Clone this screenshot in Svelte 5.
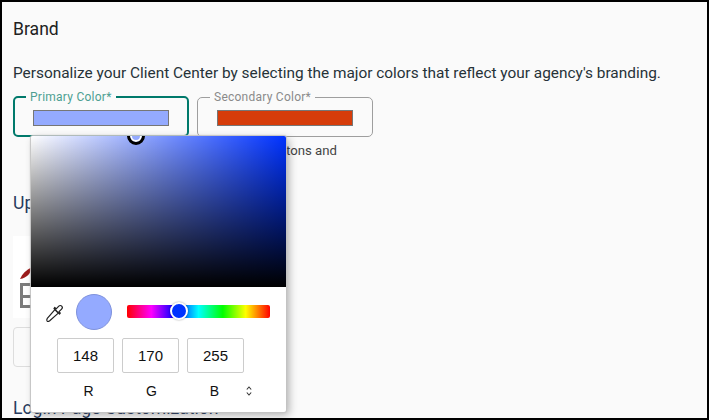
<script>
  const channels = [
    { label: 'R', value: 148 },
    { label: 'G', value: 170 },
    { label: 'B', value: 255 }
  ];
</script>

<div class="page">
  <h2 class="brand">Brand</h2>
  <p class="intro">Personalize your Client Center by selecting the major colors that reflect your agency's branding.</p>

  <div class="fields">
    <fieldset class="field active">
      <legend>Primary Color*</legend>
      <div class="swatch primary"></div>
    </fieldset>
    <fieldset class="field">
      <legend>Secondary Color*</legend>
      <div class="swatch secondary"></div>
    </fieldset>
  </div>
  <p class="hint">Used for buttons and</p>

  <h2 class="upload">Upload Logo</h2>
  <div class="logo">
    <svg width="80" height="82" viewBox="0 0 80 82" aria-hidden="true">
      <path d="M7 43c2-5 6-9 12-12-1 6-5 11-12 12z" fill="#9c1c1c" />
      <path d="M7 47h18v3H10v9h12v3H10v7h15v3H7z" fill="#7b7b7b" />
    </svg>
  </div>
  <div class="upload-btn"></div>
  <h2 class="login">Login Page Customization</h2>

  <div class="picker">
    <div class="saturation">
      <span class="sat-handle"></span>
    </div>
    <div class="controls">
      <svg class="dropper" width="20" height="20" viewBox="0 0 20 20" aria-hidden="true">
        <path d="M2.2 18.2c-.9-.9-.4-2 .1-2.800l7.600-8.700 3.400 3.400-8.600 7.600c-.8.600-1.700 1.200-2.500.500z" fill="#fff" stroke="#222" stroke-width="1.200" stroke-linejoin="round" />
        <path d="M9 5.500l5.500 5.500 .8-.8-1.300-1.500 2.600-2.600c.9-.9.900-2.200.100-3-.8-.8-2-.8-2.900.100l-2.600 2.600-1.500-1.300z" fill="#fff" stroke="#222" stroke-width="1.200" stroke-linejoin="round" />
      </svg>
      <span class="preview"></span>
      <div class="hue"><span class="hue-handle"></span></div>
    </div>
    <div class="inputs">
      {#each channels as c}
        <div class="value">{c.value}</div>
      {/each}
    </div>
    <div class="labels">
      {#each channels as c}
        <div class="label">{c.label}</div>
      {/each}
      <svg class="toggle" width="6" height="12" viewBox="0 0 6 12" aria-hidden="true">
        <path d="M.8 4.500L3 2l2.200 2.500M.8 7.500L3 10l2.200-2.500" fill="none" stroke="#333" stroke-width="1.100" />
      </svg>
    </div>
  </div>
</div>

<style>
  :global(body) {
    margin: 0;
  }

  .page {
    position: relative;
    box-sizing: border-box;
    width: 709px;
    height: 420px;
    overflow: hidden;
    padding: 17px 11px 0;
    border: 2px solid #000;
    background: #fafafa;
    color: #263238;
    font-family: Roboto, "Liberation Sans", sans-serif;
  }

  h2 {
    margin: 0;
    font-size: 17.6px;
    font-weight: 400;
    line-height: 20px;
    white-space: nowrap;
  }

  .brand {
    color: #212121;
  }

  .intro {
    margin: 24px 0 0;
    font-size: 15.4px;
    line-height: 20px;
    white-space: nowrap;
  }

  .fields {
    display: flex;
    gap: 8px;
    margin-top: 7px;
  }

  .field {
    box-sizing: border-box;
    width: 176px;
    height: 47px;
    margin: 0;
    padding: 0 19px;
    border: 1px solid #9e9e9e;
    border-radius: 5px;
  }

  .field.active {
    border: 2px solid #00796b;
    padding: 0 18px;
  }

  legend {
    padding: 0 4px;
    margin-left: -7px;
    color: #8a8a8a;
    font-size: 12px;
    line-height: 14px;
    letter-spacing: 0.25px;
  }

  .active legend {
    color: #4d9f92;
  }

  .swatch {
    box-sizing: border-box;
    width: 136px;
    height: 16px;
    margin-top: 6px;
    border: 1px solid #767676;
  }

  .primary {
    background: #94aaff;
  }

  .secondary {
    background: #d63c0a;
  }

  .hint {
    width: 324px;
    margin: 6px 0 0;
    color: #444;
    font-size: 13.2px;
    line-height: 16px;
    text-align: right;
  }

  .upload {
    margin-top: 34px;
    color: #263a5e;
  }

  .logo {
    width: 90px;
    height: 82px;
    margin-top: 23px;
    background: #fff;
  }

  .logo svg {
    display: block;
  }

  .upload-btn {
    box-sizing: border-box;
    width: 90px;
    height: 40px;
    margin-top: 9px;
    border: 1px solid #ddd;
    border-radius: 4px;
  }

  .login {
    margin-top: 31px;
    color: #263a5e;
  }

  .picker {
    position: absolute;
    left: 29px;
    top: 134px;
    box-sizing: border-box;
    width: 255px;
    height: 276px;
    border-radius: 2px;
    background: #fff;
    box-shadow: 0 0 1px 1px #c4c4c4, 3px 3px 8px rgba(0, 0, 0, 0.3);
  }

  .saturation {
    position: relative;
    height: 151px;
    overflow: hidden;
    border-radius: 2px 2px 0 0;
    background:
      linear-gradient(to top, #000, rgba(0, 0, 0, 0)),
      linear-gradient(to right, #fff, rgba(255, 255, 255, 0)),
      #0032ff;
  }

  .sat-handle {
    position: absolute;
    left: 96px;
    top: -9px;
    width: 18px;
    height: 18px;
    box-sizing: border-box;
    border: 3px solid #000;
    border-radius: 50%;
    background: #94aaff;
    box-shadow: inset 0 0 0 2px #fff;
  }

  .controls {
    display: flex;
    align-items: center;
    height: 36px;
    margin-top: 7px;
    padding-left: 14px;
  }

  .dropper {
    flex: none;
    width: 20px;
    height: 20px;
    margin-top: 2px;
  }

  .preview {
    flex: none;
    box-sizing: border-box;
    width: 36px;
    height: 36px;
    margin-left: 11px;
    border: 1px solid #7f92dc;
    border-radius: 50%;
    background: #94aaff;
  }

  .hue {
    position: relative;
    flex: none;
    width: 143px;
    height: 13px;
    margin: 0 0 2px 15px;
    border-radius: 2px;
    background: linear-gradient(to right, #f00 0%, #f0f 17%, #00f 33%, #0ff 50%, #0f0 67%, #ff0 83%, #f00 100%);
  }

  .hue-handle {
    position: absolute;
    left: 43px;
    top: -3px;
    box-sizing: border-box;
    width: 18px;
    height: 18px;
    border: 2px solid #fff;
    border-radius: 50%;
    background: #0032ff;
    box-shadow: 0 0 2px rgba(0, 0, 0, 0.4);
  }

  .inputs {
    display: flex;
    gap: 8px;
    margin-top: 8px;
    padding-left: 26px;
  }

  .value {
    box-sizing: border-box;
    width: 57px;
    height: 35px;
    border: 1px solid #ccc;
    border-radius: 2px;
    color: #111;
    font-family: "Liberation Sans", Arial, sans-serif;
    font-size: 15px;
    line-height: 33px;
    text-align: center;
  }

  .labels {
    display: flex;
    align-items: center;
    margin-top: 10px;
    padding-left: 26px;
    color: #111;
    font-family: "Liberation Sans", Arial, sans-serif;
    font-size: 14px;
    line-height: 16px;
  }

  .label {
    width: 63px;
    text-align: center;
  }

  .toggle {
    margin-left: 0;
  }
</style>
